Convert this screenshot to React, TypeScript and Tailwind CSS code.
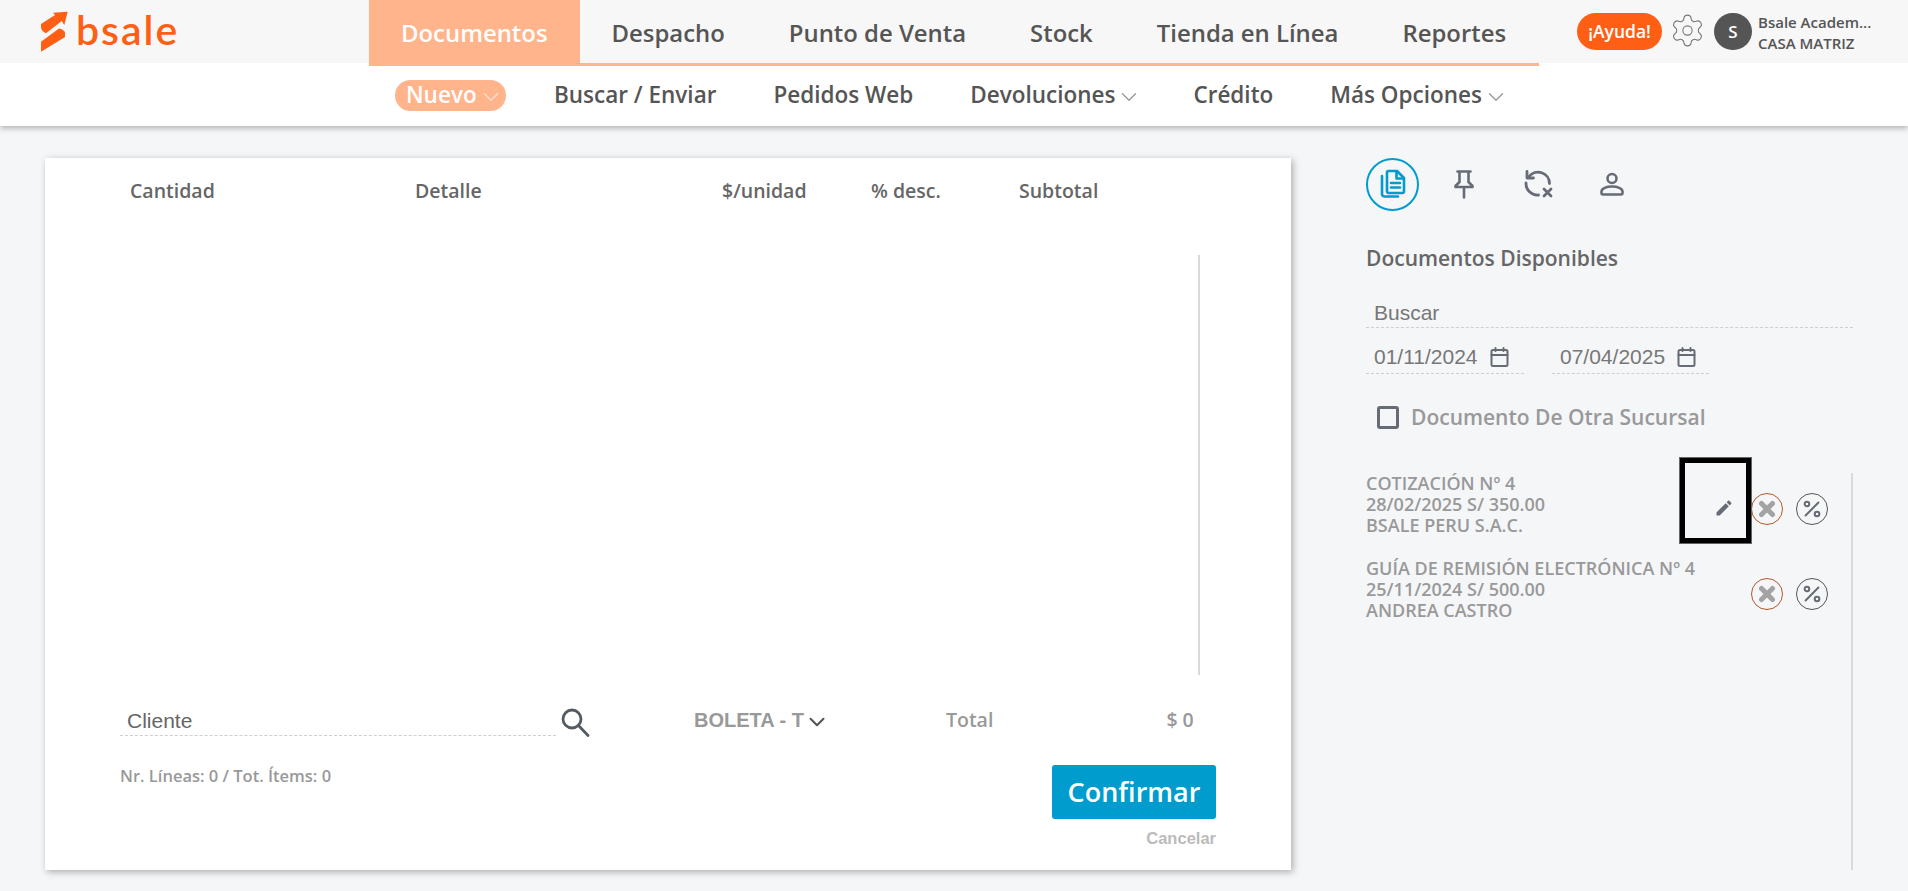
import { ChevronDown, Percent, Settings } from 'lucide-react';

const tabs = ['Despacho', 'Punto de Venta', 'Stock', 'Tienda en Línea', 'Reportes'];

function Logo() {
  return (
    <div className="flex items-start text-[#ff5f15]">
      <svg className="mt-[11px] w-[28px] h-[41px]" viewBox="0 0 28 41" fill="currentColor">
        <path d="M1 13 L15 4 L13 1.7 L27.7 .7 L24.3 14 L21.7 10 L6 22.3 Q1 20 1 16Z" />
        <path d="M1 30.7 L19 17.5 Q25 19 25 22 L25 26 L1 40.7Z" />
      </svg>
      <span className="ml-[8px] mt-[8px] text-[41px] leading-[44px] font-semibold tracking-[2px] font-['Lato',sans-serif]">bsale</span>
    </div>
  );
}

function Caret({ className }: { className: string }) {
  return <ChevronDown className={`ml-[1px] mr-[-6px] mt-[3px] w-[26px] h-[26px] ${className}`} strokeWidth={1.25} />;
}

function SubItem({ label, caret }: { label: string; caret?: boolean }) {
  return (
    <div className="flex items-center text-[#555]">
      <span>{label}</span>
      {caret && <Caret className="text-[#999]" />}
    </div>
  );
}

function DocsIcon() {
  return (
    <svg className="w-[30px] h-[32px]" viewBox="0 0 30 32" fill="none" stroke="#009ccd" strokeWidth="2.6" strokeLinejoin="round" strokeLinecap="round">
      <path d="M4 8v18a2.5 2.5 0 0 0 2.5 2.5H20" />
      <path d="M9 4.5A1.5 1.5 0 0 1 10.5 3H19l7 7v13.5a1.5 1.5 0 0 1-1.5 1.500h-14A1.500 1.500 0 0 1 9 23.500Z" />
      <path d="M18.500 3.500V10.500H25.500" />
      <path d="M13 15h9M13 19.500h9" />
    </svg>
  );
}

function PinIcon() {
  return (
    <svg className="w-[20px] h-[29px]" viewBox="0 0 20 29" fill="none" stroke="#666b75" strokeWidth="2.6" strokeLinecap="round" strokeLinejoin="round">
      <path d="M3.500 1.500h13M5.500 1.500v10.500L1.500 16v1h17v-1l-4-4V1.500M10 17v10.500" />
    </svg>
  );
}

function SyncOffIcon() {
  return (
    <svg className="w-[29px] h-[28px]" viewBox="0 0 29 28" fill="none" stroke="#666b75" strokeWidth="2.8" strokeLinecap="round" strokeLinejoin="round">
      <path d="M25.500 13.500A11.500 11.500 0 0 0 5 6.500" />
      <path d="M3 1.500v6.500h6.500" />
      <path d="M2 13a11.500 11.500 0 0 0 12.500 12" />
      <path d="M20 19l7 7M27 19l-7 7" />
    </svg>
  );
}

function UserIcon() {
  return (
    <svg className="w-[24px] h-[24px]" viewBox="0 0 24 24" fill="none" stroke="#666b75" strokeWidth="2.6" strokeLinejoin="round">
      <circle cx="12" cy="6.500" r="4.500" />
      <path d="M1.500 19.500c0-3 5-5 10.500-5s10.500 2 10.500 5v1.500a1.500 1.500 0 0 1-1.500 1.500H3a1.500 1.500 0 0 1-1.500-1.500Z" />
    </svg>
  );
}

function CalendarIcon() {
  return (
    <svg className="w-[19px] h-[20px]" viewBox="0 0 19 20" fill="none" stroke="#666b75" strokeWidth="2" strokeLinecap="round" strokeLinejoin="round">
      <rect x="1.500" y="3" width="16" height="16" rx="1.500" />
      <path d="M1.500 8h16M5.500 1v3M13.500 1v3" />
    </svg>
  );
}

function SearchIcon() {
  return (
    <svg className="ml-[5px] mb-[-1px] w-[29px] h-[29px]" viewBox="0 0 29 29" fill="none" stroke="#555b63" strokeWidth="2.8" strokeLinecap="round">
      <circle cx="11" cy="11" r="9" />
      <path d="M17.500 17.500l9.500 10" />
    </svg>
  );
}

function RowActions() {
  return (
    <div className="flex items-center gap-[13px] mr-[23px] mt-[20px]">
      <button className="w-[32px] h-[32px] rounded-full border border-[#b5572a] flex items-center justify-center">
        <svg className="w-[18px] h-[18px] blur-[0.6px]" viewBox="0 0 18 18" stroke="#a3a3a3" strokeWidth="5" strokeLinecap="round">
          <path d="M3.500 3.500l11 11M14.500 3.500l-11 11" />
        </svg>
      </button>
      <button className="w-[32px] h-[32px] rounded-full border border-[#555] flex items-center justify-center">
        <Percent className="w-[22px] h-[22px] text-[#666b75]" strokeWidth={2.2} />
      </button>
    </div>
  );
}

export default function App() {
  return (
    <div className="min-h-screen bg-[#f5f6f8] font-['Open_Sans',sans-serif] overflow-hidden">
      <div className="h-[63px] bg-[#f7f7f7] flex items-start relative z-10">
        <div className="w-[369px] pl-[40px]">
          <Logo />
        </div>
        <nav className="w-[1170px] h-[66px] border-b-[3px] border-[#ffb48b] flex text-[23.9px] font-semibold text-[#555]">
          <div className="px-[32px] bg-[#ffb48b] text-white h-[66px] leading-[65px]">Documentos</div>
          {tabs.map((tab) => (
            <div key={tab} className="px-[32px] leading-[65px] whitespace-nowrap">{tab}</div>
          ))}
        </nav>
        <div className="ml-[38px] mt-[13px] h-[37px] w-[85px] rounded-full bg-[#ff5f15] text-white text-[17.5px] font-semibold flex items-center justify-center">¡Ayuda!</div>
        <Settings className="ml-[7px] mt-[12px] w-[37px] h-[37px] text-[#777]" strokeWidth={0.7} />
        <div className="ml-[8px] mt-[13px] w-[38px] h-[37px] rounded-full bg-[#555] text-white text-[17px] font-semibold flex items-center justify-center">S</div>
        <div className="ml-[6px] mt-[12px] text-[15px] leading-[21px] font-semibold text-[#555] whitespace-nowrap">
          <div>Bsale Academ...</div>
          <div>CASA MATRIZ</div>
        </div>
      </div>

      <div className="h-[63px] bg-white shadow-[0_2px_6px_rgba(0,0,0,0.3)] flex items-center pl-[395px] pt-[1px] text-[22.5px] font-semibold relative">
        <div className="w-[111px] h-[31px] mr-[48px] rounded-full bg-[#ffb48b] text-white flex items-center pl-[11px]">
          <span>Nuevo</span>
          <Caret className="text-[#ffe0cf]" />
        </div>
        <div className="flex gap-[57px]">
          <SubItem label="Buscar / Enviar" />
          <SubItem label="Pedidos Web" />
          <SubItem label="Devoluciones" caret />
          <SubItem label="Crédito" />
          <SubItem label="Más Opciones" caret />
        </div>
      </div>

      <main className="flex pt-[32px] pb-[21px]">
        <section className="ml-[45px] w-[1246px] h-[712px] bg-white shadow-[2px_2px_7px_rgba(0,0,0,0.3)] flex flex-col">
          <div className="flex pl-[85px] pt-[21px] h-[97px] text-[19.5px] leading-[24px] font-semibold text-[#666]">
            <div className="w-[285px]">Cantidad</div>
            <div className="w-[307px]">Detalle</div>
            <div className="w-[149px]">$/unidad</div>
            <div className="w-[148px]">% desc.</div>
            <div>Subtotal</div>
          </div>
          <div className="h-[420px] mr-[91px] self-end border-r-2 border-[#d9d9d9]" />

          <div className="flex items-end pl-[75px] pt-[31px] h-[61px]">
            <div className="w-[436px] h-[30px] border-b border-dashed border-[#cfcfcf] pl-[7px] text-[21px] leading-[30px] text-[#666] font-['Liberation_Sans',sans-serif]">Cliente</div>
            <SearchIcon />
            <div className="ml-[104px] mb-[1px] flex items-center text-[20px] font-bold text-[#999] font-['Liberation_Sans',sans-serif]">
              <span>BOLETA - T</span>
              <ChevronDown className="mt-[3px] mr-[-6px] w-[26px] h-[26px] text-[#555]" strokeWidth={1.9} />
            </div>
            <div className="ml-[122px] mb-[2px] text-[19.5px] font-semibold text-[#999]">Total</div>
            <div className="ml-[173px] mb-[2px] text-[19.5px] font-semibold text-[#999]">$ 0</div>
          </div>

          <div className="flex justify-between pl-[75px] pr-[75px] pt-[29px]">
            <div className="text-[16.5px] leading-[20px] mt-[1px] font-semibold text-[#999]">Nr. Líneas: 0 / Tot. Ítems: 0</div>
            <div className="flex flex-col items-end">
              <button className="w-[164px] h-[54px] rounded-[3px] bg-[#009ccd] text-white text-[27px] font-semibold">Confirmar</button>
              <span className="mt-[7px] text-[16.5px] font-bold text-[#bbb] font-['Liberation_Sans',sans-serif]">Cancelar</span>
            </div>
          </div>
        </section>

        <aside className="ml-[75px] w-[487px] flex flex-col">
          <div className="flex items-center h-[52px]">
            <div className="w-[53px] h-[53px] rounded-full border-2 border-[#009ccd] flex items-center justify-center">
              <DocsIcon />
            </div>
            <div className="ml-[35px] w-[20px] flex justify-center"><PinIcon /></div>
            <div className="ml-[50px] flex justify-center"><SyncOffIcon /></div>
            <div className="ml-[47px] flex justify-center"><UserIcon /></div>
          </div>

          <h2 className="mt-[35px] text-[21px] leading-[26px] font-semibold text-[#666]">Documentos Disponibles</h2>

          <div className="mt-[29px] h-[28px] border-b border-dashed border-[#cfcfcf] pl-[8px] text-[21px] leading-[26px] text-[#777] font-['Liberation_Sans',sans-serif]">Buscar</div>

          <div className="mt-[16px] flex text-[21px] leading-[26px] text-[#777] font-['Liberation_Sans',sans-serif]">
            <div className="w-[158px] h-[30px] border-b border-dashed border-[#cfcfcf] pl-[8px] flex items-start gap-[12px]">
              <span>01/11/2024</span>
              <span className="mt-[3px]"><CalendarIcon /></span>
            </div>
            <div className="ml-[28px] w-[157px] h-[30px] border-b border-dashed border-[#cfcfcf] pl-[8px] flex items-start gap-[12px]">
              <span>07/04/2025</span>
              <span className="mt-[3px]"><CalendarIcon /></span>
            </div>
          </div>

          <div className="mt-[29px] ml-[11px] flex items-center h-[28px]">
            <div className="w-[22px] h-[23px] rounded-[3px] border-[3px] border-[#666b75]" />
            <span className="ml-[12px] mt-[2px] text-[21px] font-semibold text-[#999]">Documento De Otra Sucursal</span>
          </div>

          <div className="mt-[42px] h-[397px] border-r-2 border-[#d9dadc] text-[18px] leading-[21px] font-semibold text-[#999]">
            <div className="relative flex items-start justify-between">
              <div>
                <div>COTIZACIÓN Nº 4</div>
                <div>28/02/2025 S/ 350.00</div>
                <div>BSALE PERU S.A.C.</div>
              </div>
              <RowActions />
              <div className="absolute left-[314px] top-[-15px] w-[71px] h-[85px] border-[5px] border-black outline outline-1 outline-[#666] flex items-center justify-center">
                <svg className="ml-[16px] mt-[14px] w-[20px] h-[20px]" viewBox="0 0 24 24" fill="#666b75">
                  <path d="M3 17.250V21h3.750L17.810 9.940l-3.750-3.750L3 17.250zM20.710 7.040c.39-.39.39-1.020 0-1.410l-2.340-2.340c-.39-.39-1.020-.39-1.410 0l-1.830 1.830 3.750 3.750 1.830-1.830z" />
                </svg>
              </div>
            </div>
            <div className="mt-[22px] flex items-start justify-between">
              <div>
                <div>GUÍA DE REMISIÓN ELECTRÓNICA Nº 4</div>
                <div>25/11/2024 S/ 500.00</div>
                <div>ANDREA CASTRO</div>
              </div>
              <RowActions />
            </div>
          </div>
        </aside>
      </main>
    </div>
  );
}
